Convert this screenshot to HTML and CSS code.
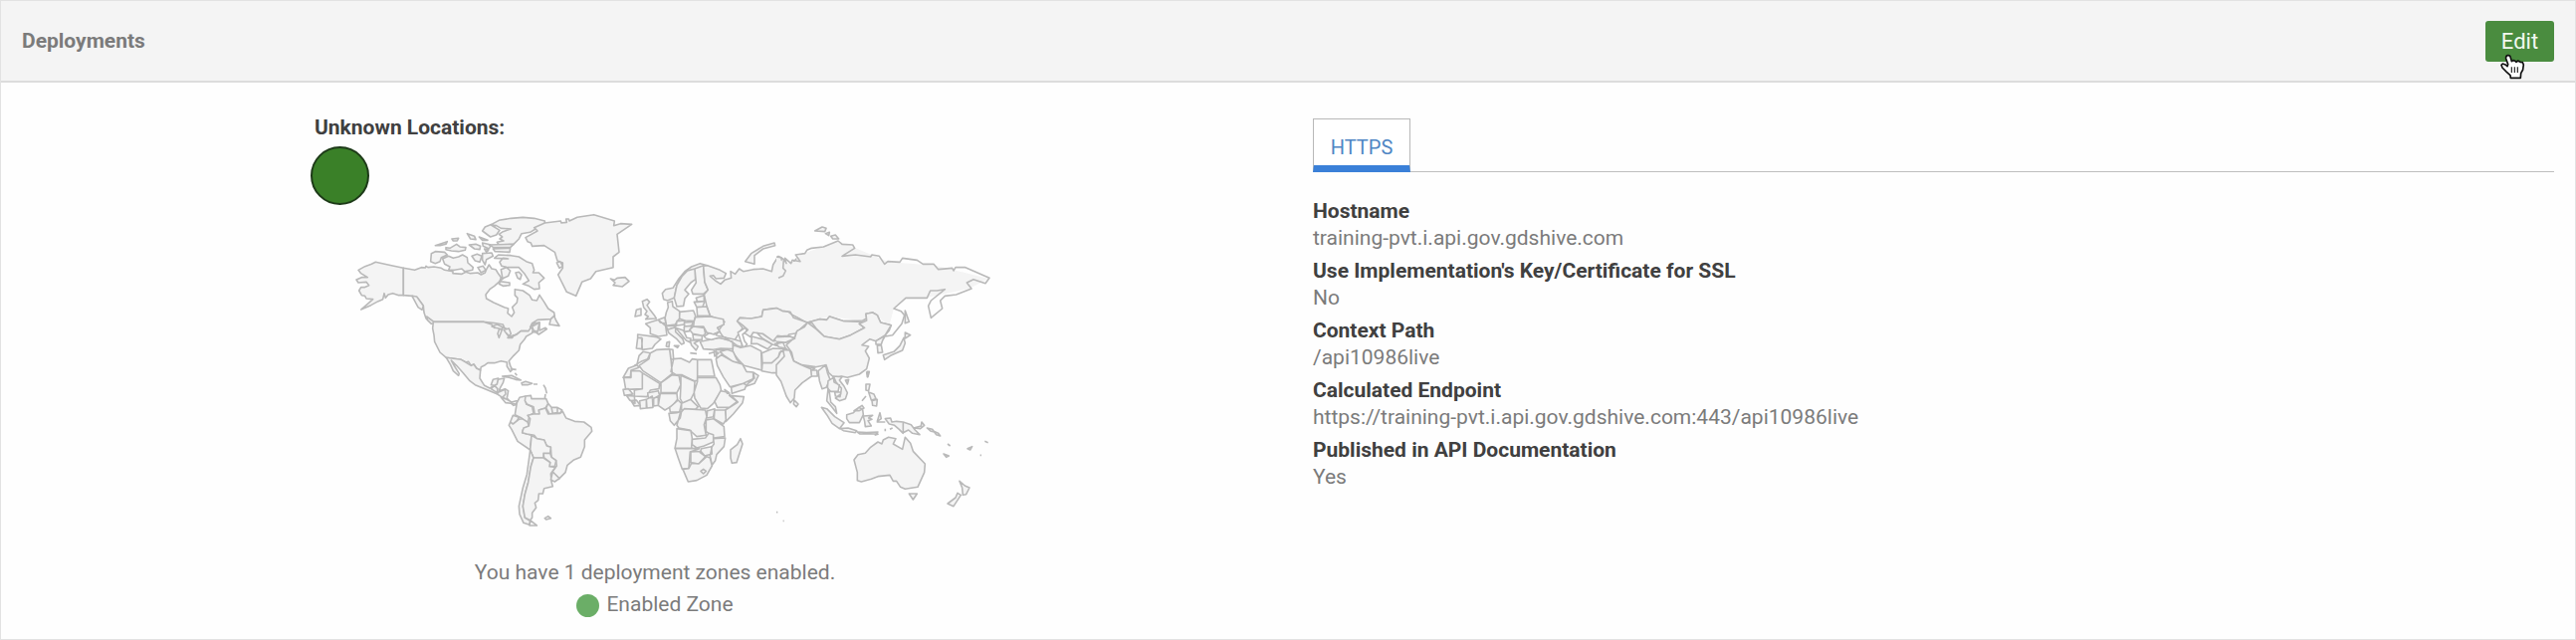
FILE: index.html
```html
<!DOCTYPE html>
<html lang="en">
<head>
<meta charset="utf-8">
<title>Deployments</title>
<link rel="stylesheet" href="styles.css">
</head>
<body>
<section class="panel">
  <header class="panel-header">
    <h2 class="panel-title">Deployments</h2>
    <button class="edit-button" type="button">Edit</button>
    <svg class="pointer" viewBox="214 160 78 82" width="26" height="27.3" aria-hidden="true">
      <path d="M239 168C244 167 247 170 248 175L251 186L256 183L262 185L265 188L270 184L277 188L284 189L287 196L285 211L279 222L278 236L248 236L247 228L236 218L223 205L220 197L224 193L232 196L238 201L240 195L234 178C233 172 235 169 239 168Z" fill="#fff" stroke="#111" stroke-width="5" stroke-linejoin="round"/>
      <path d="M251 203V220M260 203V220M269 203V220" stroke="#222" stroke-width="3.5" fill="none"/>
    </svg>
  </header>
  <div class="panel-body">
    <div class="zones">
      <strong class="unknown-label">Unknown Locations:</strong>
      <span class="unknown-dot"></span>
      <svg class="map" viewBox="312 207 692 350" width="692" height="350" role="img" aria-label="World map">
        <!-- North America -->
        <g transform="translate(340 200) scale(.33333)">
          <path d="M196 208L160 200L112 190L100 196L80 203L60 214L68 224L88 236L70 236L54 243L60 252L84 250L92 260L78 266L68 266L62 276L70 290L80 292L84 300L104 302L88 316L68 333L98 320L120 308L134 302L138 284L142 298L150 288L164 284L182 290L196 290Z"/>
          <path d="M196 208L230 214L250 206L262 207L264 202L270 206L288 204L310 208L320 214L345 218L345 224L372 226L384 220L398 224L420 222L430 228L442 222L446 212L454 198L462 210L474 212L480 222L490 236L486 248L470 262L456 272L444 288L446 300L468 312L500 326L512 330L510 344L522 354L530 342L524 326L538 312L540 298L532 290L532 272L556 276L576 290L584 304L598 306L606 289L620 310L632 330L650 342L652 354L640 362L600 364L584 374L578 386L592 374L606 372L606 396L624 388L628 392L604 408L596 402L580 400L568 398L550 398L538 406L516 418L504 408L516 402L500 388L496 378L470 374L436 370L286 370L278 372L264 360L258 342L256 322L240 300L222 292L196 290Z"/>
          <path d="M222 292L236 294L256 322L252 334L240 326ZM266 354L282 366L292 374L280 376L268 364Z"/>
          <path d="M286 370H436L462 378L470 388L490 386L500 388L514 396L506 404L516 418L538 408L550 398L572 398L580 388L586 392L584 404L566 414L560 424L548 438L544 456L528 472L514 488L518 502L524 514L518 520L508 504L508 492L490 488L470 494L450 494L442 500L430 506L428 516L416 510L408 498L400 502L392 490L384 492L370 484L325 478L306 462L290 430L288 410L284 390Z"/>
          <path d="M462 384L478 378L496 386L492 392L474 388ZM484 394L494 390L490 402L484 418L480 406ZM498 394L514 390L520 406L514 412L504 402ZM510 418L528 410L524 418Z"/>
          <path d="M640 362L636 378L666 382L656 366L650 352ZM584 384L606 372L600 400L588 396Z"/>
          <path d="M325 478L370 484L384 492L400 502L408 498L416 510L428 516L426 540L440 562L456 570L474 560L480 544L500 540L496 554L488 568L484 578L502 572L512 578L508 600L522 616L538 610L544 618L528 622L508 606L488 592L456 578L436 570L412 560L396 548L376 524L356 502L340 486L350 504L364 526L362 532L346 518L338 500Z"/>
          <path d="M280 164L292 158L320 160L328 168L310 176L306 188L292 194L278 188ZM314 180L332 172L346 178L362 174L374 168L388 176L390 192L406 206L404 214L380 218L372 210L350 214L332 214L336 204L320 196ZM324 146L336 148L356 136L366 144L384 146L382 154L362 158L340 156L324 152ZM292 140L328 128L324 136L306 140ZM342 120L362 118L358 126L346 126ZM388 104L410 112L414 122L398 120ZM394 138L414 136L428 142L426 152L410 150ZM402 172L418 166L432 172L426 190L412 186ZM424 114L450 124L434 124ZM434 164L462 162L466 172L446 182L442 198L434 184ZM420 206L436 202L444 214L430 222Z"/>
          <path d="M434 96L442 84L466 74L484 64L520 58L556 55L590 58L622 66L622 76L608 84L594 90L578 100L552 104L544 120L528 136L484 138L478 130L498 126L486 120L494 114L484 106L496 98L520 90L490 88L476 80L460 78L486 94L476 108L458 114Z"/>
          <path d="M434 132L460 138L454 150L436 142ZM454 138L528 136L518 146H468ZM466 150L518 148L516 160L472 158ZM440 150L452 154L446 160Z"/>
          <path d="M470 178L482 168L520 170L544 174L566 188L584 194L590 214L586 222L604 222L620 238L604 252L606 270L590 272L574 262L556 256L574 246L560 224L544 206L510 206L492 202L486 190L496 178L512 180ZM534 222L544 220L552 228L548 242L540 238ZM490 212L506 206L518 216L512 232L498 238L486 248L516 252L516 260L496 262L484 256L494 236Z"/>
        </g>
        <!-- Greenland and Iceland -->
        <g transform="translate(500 200) scale(.33333)">
          <path d="M110 86L142 72L190 66L192 72L208 70L206 60L214 60L216 66L240 55L290 47L352 66L350 80L370 74L404 76L360 106L366 160L348 174V206L296 218L280 240L254 250L236 292L208 280L182 228L196 208L196 192L180 186L172 160L140 140L104 142L100 132L90 128L84 116L120 96ZM178 192L188 188L196 202L186 208Z"/>
          <path d="M340 240L352 244L360 238L384 236L396 248L376 264L348 260L354 252Z"/>
        </g>
        <!-- South America and the Caribbean -->
        <g transform="translate(440 370) scale(.33333)">
          <path d="M194 24L222 22L250 36L234 34L214 28ZM252 44L264 40L284 46L270 50L254 50ZM288 48H300M318 50L324 60L328 76M324 78L322 90M218 2L236 4M232 14L238 22"/>
          <path d="M160 62L170 52L180 62L178 74ZM160 50L166 34L182 30L178 48L170 52ZM178 74L202 64L204 78L194 88L182 80ZM190 88L208 94L222 102L236 98L242 100L234 108L220 106L204 104Z"/>
          <path d="M264 84L246 88L238 104L234 128L232 140L252 150L270 166L276 142L288 136L284 116L266 108L264 92Z"/>
          <path d="M264 84L280 82L282 92L326 92L332 106L324 120L304 126L306 138L292 140L288 116L268 108L262 98ZM332 106L342 118L346 136L336 138L326 120ZM342 118L360 118L360 134L346 136ZM360 118L374 126L368 136L360 134Z"/>
          <path d="M226 142L244 148L238 158L226 168L218 162ZM218 162L226 168L244 154L254 152L270 162L274 174L256 186L254 194L268 198L282 202L278 246L240 220L222 184L214 172Z"/>
          <path d="M288 138L306 138L304 126L324 120L332 138L368 136L376 130L386 150L412 160L440 162L462 178L464 190L442 216V236L430 268L410 276L390 292L384 314L364 334L348 316L340 318L358 294L356 278L342 268L340 238L328 234L320 216L298 212L290 202L268 198L254 194L258 180L274 174L278 152L270 142Z"/>
          <path d="M282 202L298 212L320 216L328 234L340 238L338 256L318 256V270L288 270L278 246ZM318 256L338 256L342 268L356 278L352 296L336 296L338 284L320 270Z"/>
          <path d="M278 246L288 270L280 296L272 344L262 380L256 416L262 450L278 460L276 472L258 466L246 440L244 416L256 360L268 320L274 276Z"/>
          <path d="M288 270H318L338 284L336 296L354 298L340 318L342 342L346 356L320 362L316 378H304L302 398L292 406L296 420L284 436L284 450L278 458L262 450L256 416L262 380L272 344L280 296ZM346 312L366 332L352 342L340 336ZM278 458L298 474L276 474ZM322 452L332 446L340 452L326 456Z"/>
        </g>
        <!-- Europe, Africa and the Middle East -->
        <g transform="translate(600 240) scale(.33333)">
          <path d="M118 214L132 210V230L114 234ZM136 188L150 182L158 190L150 200L158 212L172 230L178 240L146 242L154 234L144 228L150 218L140 206Z"/>
          <path d="M196 164L206 152L228 148L246 120L264 98L284 84L310 74L332 80L318 88L292 92L272 96L256 112L240 140L232 178L212 186L200 182Z"/>
          <path d="M232 178L240 140L256 112L272 96L294 90L296 122L282 132L264 154L276 166L264 180L260 202L240 204ZM294 90L320 80L324 130L334 154L320 166L288 166L284 154L298 132Z"/>
          <path d="M332 80L370 94L388 104L382 118L358 120L350 110L340 112L356 126L372 136L384 124L404 118L402 98L416 106L428 90L440 98L470 92L500 90L526 98L530 78L546 52L556 58L550 90L556 116L564 106L566 82L590 72L600 60V216L570 214L546 208L500 214L496 234L464 240L430 238L422 248L438 268L424 290L414 306L380 296L366 276L384 250L340 232L330 202L322 168L334 154L324 130L320 82Z"/>
          <path d="M446 68L464 44L500 22L534 12L536 20L500 30L474 50L474 76Z"/>
          <path d="M298 178L322 170V188L302 190ZM292 190L324 188L318 204L300 206ZM300 206L330 204L340 232L302 232ZM248 220L290 216L296 232L292 248L264 246L246 240Z"/>
          <path d="M208 222L214 206L212 192L226 188L228 204L248 218L248 240L240 250L232 262H208L204 240ZM184 244L204 236L208 256L190 252ZM164 250L184 244L206 262L210 290L184 294L160 286V268L146 256ZM206 262L236 258L234 268L214 274ZM240 248L264 246L262 258L238 262ZM262 252L290 250L284 262L264 266Z"/>
          <path d="M292 248L296 236L340 234L380 242L382 258L362 268L370 280L348 288L330 282L320 264L290 264ZM290 264L322 268L326 286L318 292L288 286L278 274ZM262 264L286 262L278 278L262 280ZM288 288L316 292V304L290 304Z"/>
          <path d="M212 274L236 266L236 280L258 302L262 314L254 318L240 302L216 284ZM236 268L260 276L270 298L282 300L280 312L268 306ZM280 306L308 306L292 314L304 324L298 336L284 320ZM210 312L218 310L216 326L208 324ZM232 322L246 322L242 328Z"/>
          <path d="M122 288L180 296L192 302L174 318L166 330L136 334L134 298L122 298ZM122 298L136 300L134 332L118 330Z"/>
          <path d="M310 310L340 304L370 298L408 310L410 332L372 330L350 334L320 332ZM380 296L410 302L436 310V326L422 322L408 312ZM358 334L384 334L378 350L360 360ZM352 338L366 344L354 354ZM280 344L300 346M336 346L350 342"/>
          <path class="sea" d="M328 300L322 294L338 284L352 288L366 280L358 290L384 296L392 304L366 298L344 304Z"/>
          <path class="sea" d="M424 282L446 268L452 278L438 288L444 308L452 318L440 328L432 306Z"/>
          <path d="M422 248L430 238L464 240L496 234L500 214L546 208L570 214L586 228L634 252L612 272L602 284L578 288L572 296L544 292L530 308L498 286L470 282L462 296L444 284L454 274L438 260ZM466 294L480 298L502 304L528 318L514 332L482 316L464 316ZM482 284L500 286L530 308L552 306L540 322L528 318L498 300ZM544 294L576 292L590 298L560 302ZM536 316L560 312L568 330L548 326Z"/>
          <path d="M410 320L432 328L462 322L494 338L496 396L460 386L442 382L424 362L408 342ZM496 344L530 330L572 332L550 342L546 356L526 374L498 374ZM498 374L526 374L546 356L554 338L576 344L580 354L562 388L546 404L528 404L496 398Z"/>
          <path d="M370 340L392 334L410 340L420 362L430 374L410 370L380 350ZM358 362L374 350L410 370L438 378L450 400L470 402L474 420L440 436L400 446L380 416L362 382ZM404 448L440 436L450 440L444 454L406 466ZM470 402L486 412L474 436L450 444L454 436L470 424Z"/>
          <path d="M120 378L126 352L138 340L160 344L152 362L132 370L112 382ZM78 418L94 390L120 380L126 388L102 396L100 416Z"/>
          <path d="M160 344L180 334L218 332L222 360L226 406L192 434L138 398L126 382L156 362ZM218 332L228 334L230 362L222 364ZM230 362L252 360L278 372L286 362L302 364V428L292 428L256 410L238 410L222 400ZM302 364L344 364L348 384L354 414H302Z"/>
          <path d="M80 418H102V398H128L136 404L136 452L86 454ZM136 404L188 436L186 452L160 456L150 476L112 474L112 456L136 452ZM192 434L226 410L246 412L252 440L240 464L192 464ZM252 412L294 430L292 464L280 488L258 496L250 482L252 440ZM302 418H358L370 440L374 458L350 496L332 512L312 510L294 480L292 462L302 430Z"/>
          <path d="M78 454L94 452L108 468L82 472ZM88 472L112 474L114 496L98 486ZM102 488L118 486L130 502L112 504ZM128 488L148 484V510L130 512ZM148 484L166 474L168 508L150 510ZM152 464L184 458L188 472L172 480L154 478ZM170 480L184 476V502L170 504ZM190 466L240 466L242 484L228 502L204 516L184 502Z"/>
          <path d="M218 508L244 486L254 496L248 522H220ZM254 496L282 484L304 506L296 514L254 516ZM354 490L372 458L392 462L422 490L398 508L362 508ZM384 454L398 464L392 466ZM398 472L442 476L438 494L410 528L388 550L386 516L424 492Z"/>
          <path d="M216 526L240 524L254 520L250 540L232 562L220 548ZM250 526L262 512L300 514L326 516L330 536L322 560L328 592L300 596L278 576L246 570L240 562ZM332 518L354 512L350 536L330 540ZM354 516L386 516L388 546L380 558L352 542ZM328 546L350 542L382 566L384 596L352 600L328 580Z"/>
          <path d="M240 572L282 578L286 600L284 632H234L240 602ZM286 604L326 600L336 586L350 590L350 612L322 624L300 630L286 620ZM350 602L386 600L382 626L360 650L356 668L346 682L340 654L346 626L352 618ZM314 632L344 626L346 648L324 654L310 644ZM282 642L312 640L326 656L306 678L282 674ZM234 630L308 632L280 642L276 692L256 694L244 660Z"/>
          <path d="M258 694L276 692L284 676L306 678L330 656L340 660L346 684L330 712L300 728L274 732ZM312 700L320 694L328 700L320 708ZM402 636L422 620L432 602L438 618L420 674L406 676L402 660Z"/>
        </g>
        <!-- Northern and eastern Asia -->
        <g transform="translate(780 210) scale(.33333)">
          <path class="land-only" d="M0 144L26 164L56 158L72 138L130 116L186 96L340 160L480 170L640 210L580 240L450 268L390 268L354 300L340 352L290 312L270 338L160 324L94 342L42 310L0 298Z"/>
          <path class="line" d="M0 144L14 146L22 152L20 178L28 186L20 202L6 208M22 150L30 164L26 148L44 164L48 154L72 158L58 138L86 134L92 124L106 118L142 114L186 96L198 106L230 108L236 118L198 142L238 138L284 144L288 138L310 142L326 166L336 158L372 160L380 148L424 154L442 166L474 166L488 182L530 178L534 186L540 176L570 176L642 208L630 224L594 212L574 222L588 240L542 258L508 262L494 276L500 300L466 328L458 292L466 276L508 242L484 246H464L454 268H390L354 300L376 308L386 320L378 346L350 380L328 384"/>
          <path d="M116 66L138 54L150 58L146 68ZM148 74L160 70L158 80ZM164 82L178 78L188 90L170 90ZM388 306L400 340L388 344Z"/>
          <path class="line" d="M0 298L20 308L42 310L52 328L94 342L130 332L152 334L160 324L204 338L260 336L272 330L270 316L290 312L304 320L314 342L346 350L340 366L328 380M94 342L84 356L62 368L56 386L30 402L0 404"/>
          <path d="M94 342L108 344L120 360L144 384L190 392L224 380L266 358L250 346L262 340L204 338L160 324L152 334L130 332Z"/>
          <path d="M94 342L120 362L144 384L190 392L224 380L266 358L250 346L272 336L270 316L290 312L304 320L314 342L346 350L328 380L300 398L282 392L258 410L278 414L268 428L280 450L272 482L250 498L214 508L196 504L176 510L158 494L150 470L118 476L76 470L52 458L46 432L30 410L56 386L62 368L84 356Z"/>
          <path d="M300 398L328 382L320 396L316 408L300 408ZM304 412L316 410L320 432L306 434ZM388 372L404 380L388 390ZM384 388L388 404L380 426L344 442L326 454L322 440L354 430L372 412ZM272 492L278 492L274 506ZM208 516L218 514L214 528Z"/>
          <path d="M0 386L40 384L56 390L28 402L0 400M52 462L76 472L116 480L100 488L58 472ZM102 486L122 486L124 504L106 504Z"/>
        </g>
        <!-- Southern Asia and Oceania -->
        <g transform="translate(780 370) scale(.33333)">
          <path d="M0 -10L24 -36L20 -56L40 -54L52 -22L76 -10L104 2L106 24L78 44L56 66L54 90L42 104L30 84L14 40L0 20ZM54 96L66 108L60 116L52 108ZM126 8L136 0L148 -10L154 14L162 34L150 58L138 62L130 38Z"/>
          <path d="M156 38L172 28L174 42L190 50L186 70L164 70L154 60ZM172 24L198 26L190 36L204 54L214 74L208 92L190 98L178 90L194 78L196 60L180 42ZM176 72L194 72L192 86L178 84ZM156 60L152 98L170 120L182 136L178 116L164 102L160 74Z"/>
          <path d="M136 118L152 122L176 146L204 164L190 182L168 166L152 140ZM192 182L216 180L242 188L238 194L202 188ZM244 192L272 194L306 192L300 198H252ZM296 202L308 198M212 140L232 134L248 118L260 124L262 140L250 164L220 164L212 152ZM234 128L258 112L264 120L250 128ZM262 144L290 142L278 150L288 154L276 158L286 174L268 176L266 160ZM304 160L312 134L316 152ZM302 162H328M328 190V182M342 184L350 180"/>
          <path d="M270 48L282 48L278 68L270 66ZM278 72L294 78L300 92L286 96ZM288 98L304 94L302 114L290 112ZM270 84L258 98M274 10L280 10L276 26Z"/>
          <path d="M328 152L344 150L348 162L362 160L382 162V196L370 184L356 172L340 168ZM382 162L406 170L418 186L432 200L410 196L398 186L382 194ZM414 180L436 174L438 162L446 172L434 182ZM454 180L470 184L476 192L466 190ZM474 190L488 196L494 204L482 200ZM516 228L524 234M504 258L520 264L512 268ZM576 242L590 236L584 246ZM628 220L638 224M614 262H618"/>
          <path d="M234 276L246 260L268 256L284 238L306 222L318 228L322 216L338 208L360 212L352 228L380 244L388 208L404 226L412 250L448 288L446 314L426 358L388 364L374 358L362 340L352 340L342 322L306 326L286 334L256 342L244 338V314ZM400 378L424 378L412 396Z"/>
          <path d="M552 340L568 354L582 360L572 380L562 382L560 360ZM546 376L556 382L534 416L516 408L540 390ZM0 434H4M20 460H23"/>
        </g>
      </svg>
      <p class="map-caption">You have 1 deployment zones enabled.</p>
      <p class="legend"><span class="legend-dot"></span>Enabled Zone</p>
    </div>
    <div class="details">
      <nav class="tabs"><a class="tab">HTTPS</a></nav>
      <dl class="fields">
        <dt>Hostname</dt><dd>training-pvt.i.api.gov.gdshive.com</dd>
        <dt>Use Implementation's Key/Certificate for SSL</dt><dd>No</dd>
        <dt>Context Path</dt><dd>/api10986live</dd>
        <dt>Calculated Endpoint</dt><dd>https://training-pvt.i.api.gov.gdshive.com:443/api10986live</dd>
        <dt>Published in API Documentation</dt><dd>Yes</dd>
      </dl>
    </div>
  </div>
</section>
</body>
</html>
```

FILE: styles.css
```css
* { box-sizing: border-box; }
body {
  margin: 0;
  background: #fff;
  color: #7b7b7b;
  font: 21px/27px Roboto, sans-serif;
}
.panel {
  height: 643px;
  border: 1px solid #e2e2e2;
  background: #fefefe;
  overflow: hidden;
}
.panel-header {
  position: relative;
  display: flex;
  align-items: center;
  justify-content: space-between;
  height: 82px;
  padding: 0 21px;
  background: #f4f4f4;
  border-bottom: 2px solid #dcdcdc;
}
.panel-title { margin: 0; font-size: 21px; font-weight: 700; }
.edit-button {
  width: 69px;
  height: 41px;
  padding: 0;
  border: 0;
  border-radius: 3px;
  background: #4a8c3f;
  color: #f2f8f0;
  font: 22px/41px Roboto, sans-serif;
}
.pointer { position: absolute; left: 2510px; top: 52px; }
.panel-body {
  display: grid;
  grid-template-columns: 692px 1247px;
  column-gap: 315px;
  padding-left: 311px;
}
.zones { display: flex; flex-direction: column; padding-top: 32px; }
.unknown-label { padding-left: 4px; color: #404040; }
.unknown-dot {
  width: 59px;
  height: 59px;
  margin-top: 5px;
  border: 2px solid #1d3a18;
  border-radius: 50%;
  background: #3a8028;
}
.map { display: block; margin-top: 1px; }
.map path { fill: #f4f4f4; stroke: #b9b9b9; stroke-width: 4.8; stroke-linejoin: round; }
.map .land-only { stroke: none; }
.map .line { fill: none; }
.map .sea { fill: #fefefe; }
.map-caption { margin: 5px 0 0; text-align: center; }
.legend {
  display: flex;
  align-items: center;
  justify-content: center;
  gap: 7px;
  margin: 5px 0 0;
}
.legend-dot { width: 23px; height: 23px; margin-top: 2px; border-radius: 50%; background: #6bae67; }
.details { padding-top: 36px; }
.tabs { display: flex; height: 54px; border-bottom: 1px solid #bebebe; }
.tab {
  width: 98px;
  height: 54px;
  padding-top: 15px;
  border: 1px solid #b8b8b8;
  border-bottom: 7px solid #3a80d8;
  background: #fff;
  color: #5086c4;
  font-size: 20px;
  text-align: center;
}
.fields { margin: 26px 0 0; }
.fields dt { color: #404040; font-weight: 700; line-height: 27px; }
.fields dd { margin: 0 0 6px; line-height: 27px; }
```
